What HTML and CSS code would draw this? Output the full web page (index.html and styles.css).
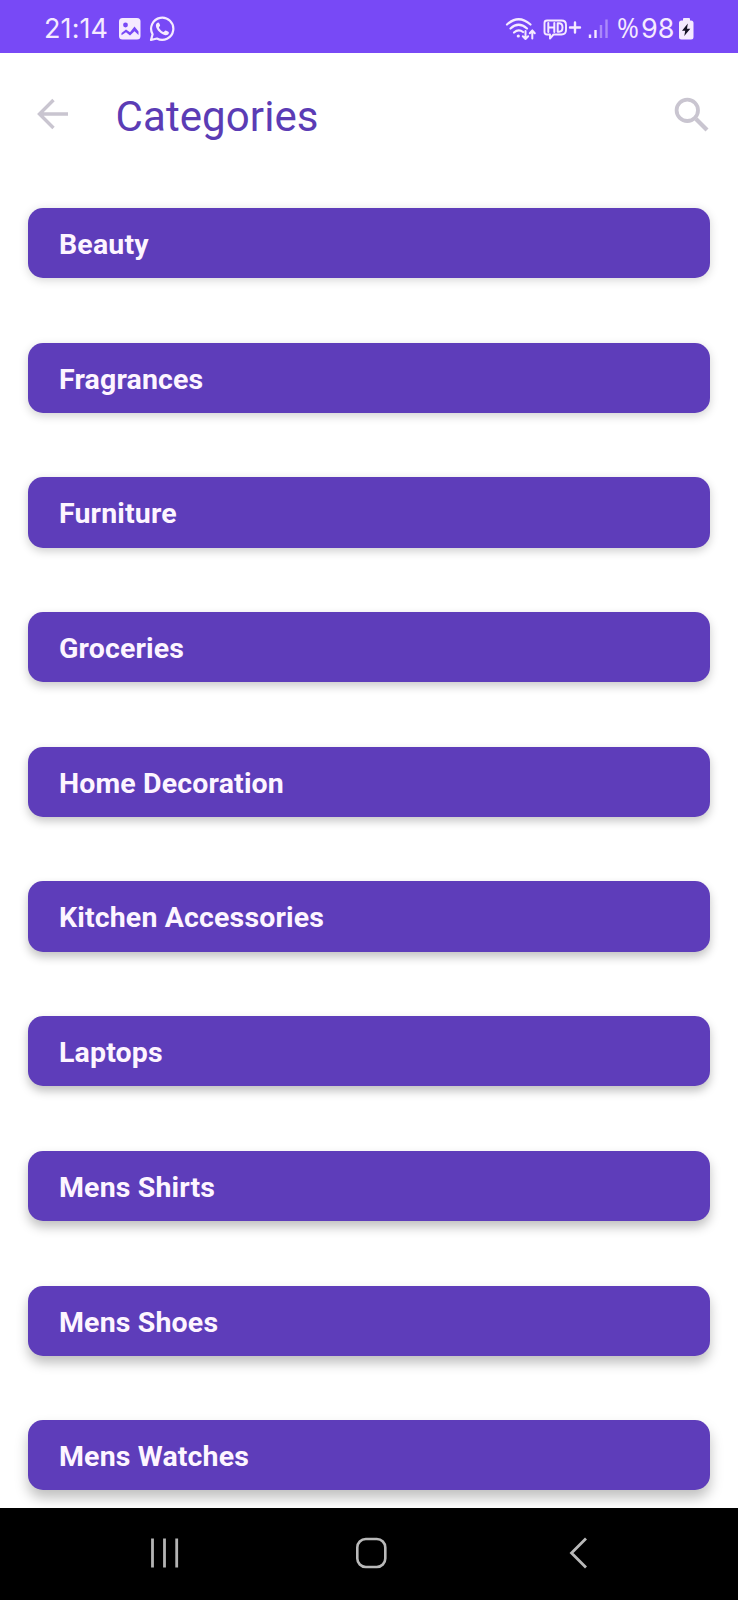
FILE: index.html
```html
<!DOCTYPE html>
<html lang="en">
<head>
<meta charset="utf-8">
<title>Categories</title>
<link rel="stylesheet" href="styles.css">
</head>
<body>
<div class="screen">
  <div class="status">
    <span class="status-time">21:14</span>
    <svg class="icon-photo" width="22" height="22" viewBox="0 0 22 22"><rect width="21.5" height="21.5" rx="3.5" fill="#f5eaff"/><circle cx="6.500" cy="7" r="2.4" fill="#7849f6"/><path d="M2.500 15 7 11.500l4 2.700L15.500 8.500l4 5v3.500l-4-3.800-4.500 4.300-4-3.200-4.500 3z" fill="#7849f6"/></svg>
    <svg class="icon-chat" width="26" height="26" viewBox="0 0 26 26"><path d="M2 24 3.6 18.3A11.1 11.1 0 1 1 7.9 22.5z" fill="none" stroke="#f5eaff" stroke-width="2.2" stroke-linejoin="round"/><path d="M9.100 6.600c-.5 0-2.300 1-2.200 3 .2 4.300 5.600 9.400 9.500 9.600 2.200.1 3.700-1.400 3.500-2.800-.2-.8-2.800-2.100-3.400-2-.7.1-1.300 1.700-2 1.600-1.300-.2-4.200-2.900-4.600-4.500 0-.7 1.200-1.300 1.200-2.100 0-.5-1-2.800-2-2.800z" fill="#f5eaff"/></svg>
    <span class="spacer"></span>
    <svg class="icon-signals" width="108" height="26" viewBox="0 0 108 26" fill="none" stroke="#f5eaff" stroke-width="2.200" stroke-linecap="round" stroke-linejoin="round">
      <path d="M2 8.500Q13.500-2 25.500 8.500M5.500 12.500Q13.500 5 22 12.500M9 16.500Q13.500 12.500 18 16"/>
      <circle cx="13.300" cy="20" r="1.600" fill="#f5eaff" stroke="none"/>
      <path d="M20.500 15v8m-2.700-2.800 2.700 2.800 2.700-2.800M27.300 22.500v-8m-2.500 2.700 2.500-2.700 2.500 2.700" stroke-width="2"/>
      <path d="M42 4.500H56.500q4.500 0 4.500 4.500v5q0 4.500-4.500 4.500H48.500l-3.500 4v-4h-3q-2.500 0-2.500-2.500V7q0-2.500 2.500-2.500z" stroke-width="1.900"/>
      <path d="M43.300 7v9m6-9v9m-6-4.500h6m3.400-4.200v8.400h1.300q3.500 0 3.500-4.200t-3.500-4.200z" stroke-width="2"/>
      <path d="M65 11.500h10m-5-5v10" stroke-width="2.400"/>
      <path d="M85 18.500v3.500M90.500 14v8" stroke-width="2.400" stroke-linecap="butt"/>
      <path d="M96 9v13M101.500 3.500V22" stroke="#ab89fa" stroke-width="2.400" stroke-linecap="butt"/>
    </svg>
    <span class="status-battery"><span class="percent">%</span>98</span>
    <svg class="icon-battery" width="16" height="22" viewBox="0 0 16 22"><path d="M5 0h5q1 0 1 1v1.500h1q2.500 0 2.500 2.500v14q0 2.500-2.500 2.500H2.500Q0 21.500 0 19V5Q0 2.500 2.500 2.500H4V1q0-1 1-1z" fill="#f5eaff"/><path d="M8.800 5.500 3 12.700h3.200L5.300 18 11.300 10.800H8z" fill="#171327"/></svg>
  </div>
  <header class="toolbar">
    <svg width="32" height="32" viewBox="0 0 32 32" fill="none" stroke="#c9c5d0" stroke-width="3.400"><path d="M31 16H3M16.500 2 2.500 16l14 14"/></svg>
    <h1 class="title">Categories</h1>
    <svg class="icon-search" width="36" height="36" viewBox="0 0 36 36" fill="none" stroke="#c9c5d0"><circle cx="13.300" cy="13.300" r="10.700" stroke-width="3.800"/><path d="m22 22 11 11" stroke-width="4.200"/></svg>
  </header>
  <main class="list">
    <div class="card level-1">Beauty</div>
    <div class="card level-2">Fragrances</div>
    <div class="card level-3">Furniture</div>
    <div class="card level-4">Groceries</div>
    <div class="card level-5">Home Decoration</div>
    <div class="card level-6">Kitchen Accessories</div>
    <div class="card level-7">Laptops</div>
    <div class="card level-8">Mens Shirts</div>
    <div class="card level-9">Mens Shoes</div>
    <div class="card level-10">Mens Watches</div>
  </main>
  <nav class="navbar">
    <svg width="30" height="32" viewBox="0 0 30 32" stroke="#b4b4b4" stroke-width="2.800"><path d="M2.500 1.500v29M14.500 1.500v29M26.700 1.500v29"/></svg>
    <svg class="icon-home" width="32" height="32" viewBox="0 0 32 32" fill="none" stroke="#b9b9b9" stroke-width="2.600"><rect x="2.300" y="2" width="28" height="28" rx="8.500"/></svg>
    <svg width="20" height="32" viewBox="0 0 20 32" fill="none" stroke="#b9b9b9" stroke-width="2.800"><path d="M17 1.500 2.500 16 17 30.500"/></svg>
  </nav>
</div>
</body>
</html>
```
FILE: styles.css
```css
body {
  margin: 0;
  background: #fff;
  font-family: Roboto, sans-serif;
}

.screen {
  display: flex;
  flex-direction: column;
  height: 1600px;
  overflow: hidden;
}

.status {
  display: flex;
  align-items: center;
  flex: none;
  height: 52.5px;
  box-sizing: border-box;
  padding: 6px 43px 0 44px;
  background: #7849f6;
  color: #f5eaff;
}

.status-time,
.status-battery {
  font: 27px/32px Inter, sans-serif;
  white-space: nowrap;
}

.status-time {
  width: 75px;
  letter-spacing: 0.1px;
}

.status-battery {
  width: 62px;
}

.percent {
  margin-right: 2px;
  font-family: "Open Sans", sans-serif;
  font-size: 26.5px;
  letter-spacing: 0;
  line-height: 1;
}

.icon-chat {
  margin-left: 8px;
}

.icon-signals {
  margin-right: 4px;
}

.spacer {
  flex: 1;
}

.toolbar {
  display: flex;
  align-items: center;
  flex: none;
  height: 123px;
  box-sizing: border-box;
  padding: 0 28.5px 0 37px;
}

.title {
  flex: 1;
  margin: 5px 0 0 46.5px;
  color: #5b3cb5;
  font-size: 42px;
  font-weight: 400;
  letter-spacing: 0.1px;
  line-height: 50px;
}

.icon-search {
  margin-top: 1px;
}

.list {
  display: flex;
  flex: 1;
  flex-direction: column;
  gap: 64.4px;
  min-height: 0;
  padding: 32.5px 28px 0;
  overflow: hidden;
}

.card {
  flex: none;
  height: 70.3px;
  box-sizing: border-box;
  padding: 2px 31px 0;
  border-radius: 15px;
  background: #5e3dba;
  color: #fdf5ff;
  font-size: 28.5px;
  font-weight: 700;
  letter-spacing: 0.15px;
  line-height: 70px;
}

.level-1 { box-shadow: 0 2px 10px rgba(0, 0, 0, 0.17); }
.level-2 { box-shadow: 0 3px 10px rgba(0, 0, 0, 0.18); }
.level-3 { box-shadow: 0 3px 10px rgba(0, 0, 0, 0.2); }
.level-4 { box-shadow: 0 4px 10px rgba(0, 0, 0, 0.21); }
.level-5 { box-shadow: 0 4px 10px rgba(0, 0, 0, 0.23); }
.level-6 { box-shadow: 0 5px 10px rgba(0, 0, 0, 0.24); }
.level-7 { box-shadow: 0 5px 10px rgba(0, 0, 0, 0.25); }
.level-8 { box-shadow: 0 6px 11px rgba(0, 0, 0, 0.25); }
.level-9 { box-shadow: 0 7px 12px rgba(0, 0, 0, 0.25); }
.level-10 { box-shadow: 0 8px 13px rgba(0, 0, 0, 0.25); }

.navbar {
  display: flex;
  align-items: center;
  justify-content: space-between;
  flex: none;
  height: 92.5px;
  box-sizing: border-box;
  padding: 0 149px 1px 150px;
  background: #000;
}

.icon-home {
  margin-right: 8px;
}
```
